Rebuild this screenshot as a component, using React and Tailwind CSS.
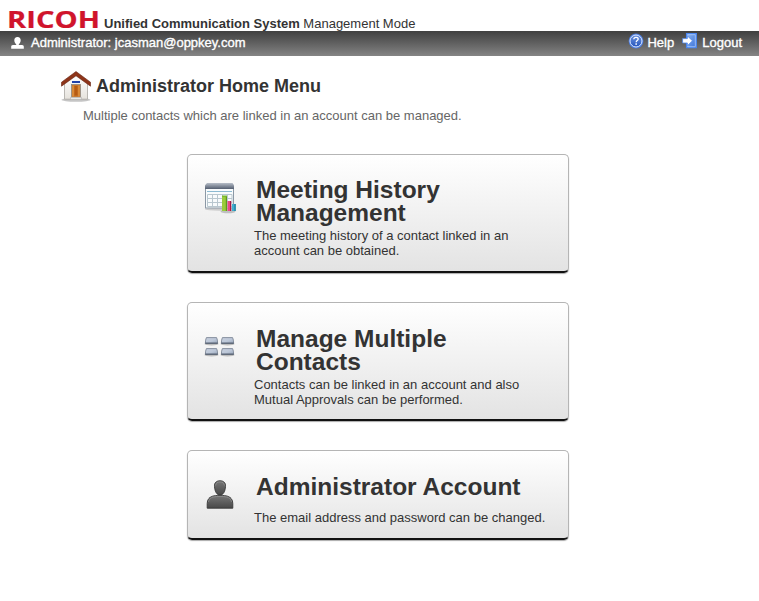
const RicohLogo = () => (
  <svg width="92" height="18" viewBox="0 0 92 18" className="block shrink-0 overflow-visible">
    <text x="0" y="16.600" textLength="93" lengthAdjust="spacingAndGlyphs" fill="#d0142c" stroke="#d0142c" strokeWidth=".2" fontFamily="Open Sans, Liberation Sans, sans-serif" fontWeight="700" fontSize="22.300">RICOH</text>
  </svg>
);

const UserIcon = () => (
  <svg width="13" height="12" viewBox="0 0 13 12" className="block shrink-0">
    <path d="M6.500 0C4.300 0 3.300 1.400 3.300 3.300c0 1.700.8 3.200 1.900 3.900v.9H2C.7 8.100.2 8.800.2 10v1.700h12.600V10c0-1.200-.5-1.900-1.800-1.900H7.800v-.9c1.100-.7 1.900-2.200 1.900-3.900C9.700 1.400 8.700 0 6.500 0z" fill="#fff" />
  </svg>
);

const HelpIcon = () => (
  <svg width="16" height="16" viewBox="0 0 16 16" className="block shrink-0">
    <defs>
      <linearGradient id="help" x1="0" y1="0" x2="0" y2="1">
        <stop offset="0" stopColor="#6f94df" />
        <stop offset="1" stopColor="#2455bd" />
      </linearGradient>
    </defs>
    <circle cx="8" cy="8" r="7.400" fill="#4a7be0" />
    <circle cx="8" cy="8" r="6" fill="url(#help)" stroke="#dce8ff" strokeWidth="1" />
    <path d="M5.800 6.300C5.900 4.900 6.800 4.300 8 4.300c1.300 0 2.200.7 2.200 1.800 0 1.500-2 1.500-2 3.200" fill="none" stroke="#fff" strokeWidth="1.300" />
    <rect x="7.400" y="10.300" width="1.500" height="1.500" fill="#fff" />
  </svg>
);

const LogoutIcon = () => (
  <svg width="16" height="16" viewBox="0 0 16 16" className="block shrink-0">
    <defs>
      <linearGradient id="door" x1="0" y1="0" x2="1" y2="1">
        <stop offset="0" stopColor="#8db5f2" />
        <stop offset="1" stopColor="#3a72d8" />
      </linearGradient>
    </defs>
    <path d="M4.600.7h9.700v14H4.600z" fill="url(#door)" stroke="#4a86ef" strokeWidth="1.300" />
    <path d="M5.700 1.700h7.600v12H5.700z" fill="none" stroke="#b8d2fa" strokeWidth=".7" />
    <path d="M.6 5.600h4.800V2.900l5.100 4.900-5.100 4.900V10H.6z" fill="#fff" stroke="#4c86ea" strokeWidth=".8" />
  </svg>
);

const HomeIcon = () => (
  <svg width="32" height="32" viewBox="0 0 32 32" className="block shrink-0">
    <defs>
      <linearGradient id="wall" x1="0" y1="0" x2="0" y2="1">
        <stop offset="0" stopColor="#fff" />
        <stop offset="1" stopColor="#e6e3dd" />
      </linearGradient>
    </defs>
    <ellipse cx="16" cy="29.800" rx="14.500" ry="2" fill="#c5c5c5" />
    <path d="M4.500 13 16 5l11.500 8v16.200h-23z" fill="url(#wall)" stroke="#aaa7a2" strokeWidth=".8" />
    <path d="M16 1.500 1.500 12.200v4L16 5.800l14.500 10.400v-4z" fill="#8e3419" stroke="#642410" strokeWidth=".6" />
    <rect x="12" y="11" width="8" height="2" fill="#2243aa" />
    <rect x="11.500" y="14.500" width="9" height="13" fill="#c87528" stroke="#8e8b84" strokeWidth=".8" />
    <path d="M12.400 15.600h1.300v11h-1.300zM18.300 15.600h1.300v11h-1.300z" fill="#e09340" />
    <path d="M14.500 16h3v9.500h-3z" fill="#b75b12" />
    <path d="M10.500 27.300h11v2.200h-11z" fill="#e9e8e5" stroke="#aaa" strokeWidth=".5" />
  </svg>
);

const HistoryIcon = () => (
  <svg width="32" height="32" viewBox="0 0 32 32" className="block">
    <defs>
      <linearGradient id="cal" x1="0" y1="0" x2="0" y2="1">
        <stop offset="0" stopColor="#b6bdc7" />
        <stop offset="1" stopColor="#535e70" />
      </linearGradient>
    </defs>
    <ellipse cx="14.500" cy="26.200" rx="14.500" ry="1.500" fill="#ccc" />
    <ellipse cx="23" cy="28.500" rx="7.500" ry="1.700" fill="#bfc0c1" />
    <rect x=".5" y="5.500" width="28" height="19.500" fill="#f8fbfc" stroke="#8b98a5" />
    <path d="M2 0h25.500l1.500 2.200V6H0V2.200z" fill="url(#cal)" />
    <path d="M2 8.500h25" stroke="#8cbad2" />
    <path d="M2.500 11.500h24.500v12H2.500zM2.500 15.500h24.500M2.500 19.500h24.500M7.500 11.500v12M12.500 11.500v12M17.500 11.500v12M22.500 11.500v12" fill="none" stroke="#b9c7cf" />
    <path d="M17 13h5v15h-5z" fill="#9acb3c" />
    <path d="M20.800 13h1.200v15h-1.200z" fill="#5c9b1b" />
    <path d="M17 12.500h5v1.300h-5z" fill="#74b52c" />
    <path d="M22.500 18H26v10h-3.500z" fill="#e94a84" />
    <path d="M25 18h1.200v10H25z" fill="#a41744" />
    <path d="M27 21h3.500v7H27z" fill="#41afd0" />
    <path d="M29.500 21h1.200v7h-1.200z" fill="#137998" />
  </svg>
);

const ContactsIcon = () => (
  <svg width="32" height="20" viewBox="0 0 32 20" className="block">
    <defs>
      <linearGradient id="key" x1="0" y1="0" x2="1" y2="1">
        <stop offset="0" stopColor="#c9d1de" />
        <stop offset=".55" stopColor="#bcc7d8" />
        <stop offset="1" stopColor="#98a6ba" />
      </linearGradient>
    </defs>
    {[[0, 0], [16, 0], [0, 11], [16, 11]].map(([x, y]) => (
      <g key={`${x}-${y}`} transform={`translate(${x} ${y})`}>
        <ellipse cx="7.500" cy="6.900" rx="7" ry="1.500" fill="#bdbdbd" />
        <path d="M2.400.6h10.200l.8 2.600.2 3H1.400l.2-3z" fill="url(#key)" stroke="#7e8897" strokeWidth=".9" />
        <path d="M1.200 6.200h12.600" stroke="#515b6b" strokeWidth="1.100" />
      </g>
    ))}
  </svg>
);

const PersonIcon = () => (
  <svg width="28" height="29" viewBox="0 0 28 29" className="block">
    <defs>
      <linearGradient id="person" x1="0" y1="0" x2="0" y2="1">
        <stop offset="0" stopColor="#777" />
        <stop offset="1" stopColor="#484848" />
      </linearGradient>
    </defs>
    <path d="M1.200 28.200v-4.500c0-4 1.800-6.300 5.300-7.500 1.800-.6 4.300-.8 7.500-.8s5.700.2 7.500.8c3.500 1.200 5.300 3.500 5.300 7.500v4.500z" fill="url(#person)" stroke="#383838" strokeWidth=".9" />
    <path d="M14 .8c3.900 0 5.800 2.200 5.500 5.600-.3 4.800-2 8.600-5.500 8.600S8.800 11.200 8.500 6.400C8.200 3 10.100.8 14 .8z" fill="url(#person)" stroke="#383838" strokeWidth=".9" />
    <path d="M9.600 5.500C10 2.800 11.600 1.900 14 1.900s4 .9 4.400 3.600M2.500 22c.3-3 2-4.300 5-5 2-.5 4-.6 6.500-.6s4.500.1 6.500.6c3 .7 4.700 2 5 5" fill="none" stroke="#999" strokeWidth=".6" />
  </svg>
);

const card = "flex w-[382px] rounded-[5px] border border-b-2 border-[#b5b5b5] border-b-[#111] bg-gradient-to-b from-white to-[#e3e3e3] shadow-[0_1px_1px_#aaa]";
const title = "whitespace-nowrap text-[24.5px] font-bold leading-[23px] text-[#333]";
const desc = "-ml-0.5 whitespace-nowrap text-[13px] leading-[15px] text-[#333]";

export default function App() {
  return (
    <div className="h-[601px] w-full overflow-hidden bg-white font-['Liberation_Sans',Arial,sans-serif] text-[13px] text-[#333]">
      <header className="flex h-[31px] items-start pl-[7px] pt-[11px]">
        <RicohLogo />
        <div className="ml-[5px] mt-[5px] whitespace-nowrap leading-[15px]">
          <b>Unified Communication System</b> Management Mode
        </div>
      </header>
      <nav className="flex h-[25px] items-start bg-gradient-to-b from-[#404040] to-[#858585] text-white [-webkit-text-stroke:0.35px_white]">
        <div className="flex pl-[11px] pt-[6px]">
          <UserIcon />
          <span className="ml-[7px] -mt-0.5 leading-[15px]">Administrator: jcasman@oppkey.com</span>
        </div>
        <div className="ml-auto flex pr-[17px] pt-[2px]">
          <HelpIcon />
          <span className="ml-[3px] mt-[2px] leading-[15px]">Help</span>
          <span className="ml-[8px]"><LogoutIcon /></span>
          <span className="ml-[4px] mt-[2px] leading-[15px]">Logout</span>
        </div>
      </nav>
      <main>
        <div className="flex pl-[60px] pt-[14px]">
          <HomeIcon />
          <h1 className="ml-1 mt-[5px] text-[18px] font-bold leading-[22px]">Administrator Home Menu</h1>
        </div>
        <p className="ml-[83px] mt-[6px] leading-[15px] text-[#666]">Multiple contacts which are linked in an account can be managed.</p>
        <div className="ml-[187px] mt-[31px] flex flex-col gap-[29px]">
          <section className={`${card} h-[119px]`}>
            <div className="w-[68px] pl-[17px] pt-[28px]"><HistoryIcon /></div>
            <div className="pt-[23px]">
              <h2 className={title}>Meeting History<br />Management</h2>
              <p className={`${desc} mt-[4px]`}>The meeting history of a contact linked in an<br />account can be obtained.</p>
            </div>
          </section>
          <section className={`${card} h-[119px]`}>
            <div className="w-[68px] pl-[16px] pt-[34px]"><ContactsIcon /></div>
            <div className="pt-[24px]">
              <h2 className={title}>Manage Multiple<br />Contacts</h2>
              <p className={`${desc} mt-[4px]`}>Contacts can be linked in an account and also<br />Mutual Approvals can be performed.</p>
            </div>
          </section>
          <section className={`${card} h-[90px]`}>
            <div className="w-[68px] pl-[18px] pt-[29px]"><PersonIcon /></div>
            <div className="pt-[24px]">
              <h2 className={title}>Administrator Account</h2>
              <p className={`${desc} mt-[12px]`}>The email address and password can be changed.</p>
            </div>
          </section>
        </div>
      </main>
    </div>
  );
}
